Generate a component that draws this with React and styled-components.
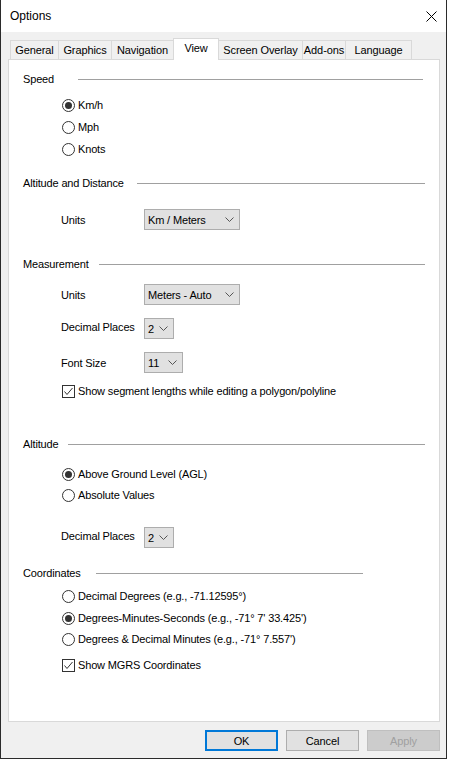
import styled, { createGlobalStyle } from "styled-components";

const GlobalStyle = createGlobalStyle`
  body {
    margin: 0;
    background: #ffffff;
    font-family: "Liberation Sans", Arial, sans-serif;
  }
`;

const WINDOW = styled.div`
  width: 447px;
  height: 759px;
  box-sizing: border-box;
  border-left: 1px solid #2b2b2b;
  border-right: 1px solid #2b2b2b;
  border-bottom: 1px solid #2b2b2b;
  display: flex;
  flex-direction: column;
  background: #f0f0f0;
`;

const TITLEBAR = styled.div`
  height: 32px;
  flex-shrink: 0;
  background: #ffffff;
  display: flex;
  align-items: center;
  justify-content: space-between;
  padding: 0 9px;
`;

const TITLE = styled.span`
  font-size: 12px;
  color: #000;
`;

const BODY = styled.div`
  flex: 1;
  padding: 6px 6px 0 7px;
  display: flex;
  flex-direction: column;
`;

const TABSTRIP = styled.div`
  height: 21px;
  display: flex;
  align-items: flex-end;
  padding-left: 2px;
`;

const TAB = styled.div`
  box-sizing: border-box;
  width: ${(p) => p.$w}px;
  height: ${(p) => (p.$active ? 22 : 19)}px;
  margin-left: -1px;
  margin-bottom: ${(p) => (p.$active ? -1 : 0)}px;
  position: relative;
  z-index: ${(p) => (p.$active ? 2 : 1)};
  border: 1px solid #d9d9d9;
  border-bottom: none;
  background: ${(p) => (p.$active ? "#ffffff" : "#f0f0f0")};
  display: flex;
  align-items: center;
  justify-content: center;
  padding-bottom: ${(p) => (p.$active ? 3 : 0)}px;
  font-size: 11px;
  letter-spacing: -0.1px;
  color: #000;
  &:first-child {
    margin-left: 0;
  }
`;

const PANEL = styled.div`
  box-sizing: border-box;
  width: 432px;
  height: 663px;
  background: #ffffff;
  border: 1px solid #d9d9d9;
  padding: 0 0 0 14px;
  display: flex;
  flex-direction: column;
  font-size: 11px;
  letter-spacing: -0.15px;
  color: #000;
`;

const HEADING = styled.div`
  display: flex;
  align-items: center;
  height: 16px;
  margin-top: ${(p) => p.$mt}px;
  padding-right: ${(p) => p.$pr}px;
`;

const HEADTEXT = styled.span`
  width: ${(p) => p.$w}px;
  flex-shrink: 0;
  white-space: nowrap;
`;

const RULE = styled.div`
  flex: 1;
  height: 1px;
  background: #a0a0a0;
`;

const OPTION = styled.div`
  display: flex;
  align-items: center;
  gap: 3px;
  height: 16px;
  margin-top: ${(p) => p.$mt}px;
  padding-left: 39px;
  white-space: nowrap;
`;

const CIRCLE = styled.span`
  box-sizing: border-box;
  width: 13px;
  height: 13px;
  border-radius: 50%;
  border: 1px solid #333333;
  background: #fff;
  display: flex;
  align-items: center;
  justify-content: center;
  flex-shrink: 0;
  &::after {
    content: "";
    display: ${(p) => (p.$checked ? "block" : "none")};
    width: 7px;
    height: 7px;
    border-radius: 50%;
    background: #333333;
  }
`;

const BOX = styled.span`
  box-sizing: border-box;
  width: 13px;
  height: 13px;
  border: 1px solid #333333;
  background: #fff;
  display: flex;
  align-items: center;
  justify-content: center;
  flex-shrink: 0;
`;

const FIELDROW = styled.div`
  display: flex;
  align-items: center;
  height: 21px;
  margin-top: ${(p) => p.$mt}px;
  padding-left: 38px;
`;

const LABEL = styled.span`
  width: 83px;
  flex-shrink: 0;
  white-space: nowrap;
  padding-bottom: ${(p) => p.$up || 0}px;
`;

const SELECT = styled.div`
  box-sizing: border-box;
  width: ${(p) => p.$w}px;
  height: 21px;
  background: #e1e1e1;
  border: 1px solid #adadad;
  display: flex;
  align-items: center;
  justify-content: space-between;
  padding: 0 5px 0 3px;
  white-space: nowrap;
`;

const BUTTONROW = styled.div`
  display: flex;
  justify-content: flex-end;
  gap: 8px;
  margin-top: 8px;
  width: 432px;
`;

const BUTTON = styled.div`
  box-sizing: border-box;
  width: 73px;
  height: 21px;
  display: flex;
  align-items: center;
  justify-content: center;
  font-size: 11px;
  letter-spacing: -0.1px;
  background: ${(p) => (p.$disabled ? "#cccccc" : "#e1e1e1")};
  border: ${(p) =>
    p.$default
      ? "2px solid #0078d7"
      : p.$disabled
      ? "1px solid #bfbfbf"
      : "1px solid #adadad"};
  color: ${(p) => (p.$disabled ? "#a0a0a0" : "#000")};
`;

function Chevron() {
  return (
    <svg width="9" height="5" viewBox="0 0 9 5">
      <polyline
        points="0.5,0.5 4.5,4.5 8.5,0.5"
        fill="none"
        stroke="#555"
        strokeWidth="1"
      />
    </svg>
  );
}

function Radio({ checked, mt, children }) {
  return (
    <OPTION $mt={mt}>
      <CIRCLE $checked={checked} />
      {children}
    </OPTION>
  );
}

function Check({ mt, children }) {
  return (
    <OPTION $mt={mt}>
      <BOX>
        <svg width="11" height="11" viewBox="0 0 11 11">
          <polyline
            points="1.5,5.5 4,8.5 9.5,2"
            fill="none"
            stroke="#333"
            strokeWidth="1"
          />
        </svg>
      </BOX>
      {children}
    </OPTION>
  );
}

function Heading({ mt, w, pr, children }) {
  return (
    <HEADING $mt={mt} $pr={pr}>
      <HEADTEXT $w={w}>{children}</HEADTEXT>
      <RULE />
    </HEADING>
  );
}

function Field({ mt, label, value, w, up }) {
  return (
    <FIELDROW $mt={mt}>
      <LABEL $up={up}>{label}</LABEL>
      <SELECT $w={w}>
        <span>{value}</span>
        <Chevron />
      </SELECT>
    </FIELDROW>
  );
}

const tabs = [
  ["General", 49],
  ["Graphics", 54],
  ["Navigation", 63],
  ["View", 46],
  ["Screen Overlay", 85],
  ["Add-ons", 44],
  ["Language", 67],
];

export default function App() {
  return (
    <>
      <GlobalStyle />
      <WINDOW>
        <TITLEBAR>
          <TITLE>Options</TITLE>
          <svg width="11" height="11" viewBox="0 0 11 11">
            <path d="M0.5 0.5 L10.5 10.5 M10.5 0.5 L0.5 10.5" stroke="#000" strokeWidth="1" />
          </svg>
        </TITLEBAR>
        <BODY>
          <TABSTRIP>
            {tabs.map(([name, w]) => (
              <TAB key={name} $w={w} $active={name === "View"}>
                {name}
              </TAB>
            ))}
          </TABSTRIP>
          <PANEL>
            <Heading mt={11} w={55} pr={16}>Speed</Heading>
            <Radio mt={10} checked>Km/h</Radio>
            <Radio mt={6}>Mph</Radio>
            <Radio mt={6}>Knots</Radio>

            <Heading mt={18} w={114} pr={14}>Altitude and Distance</Heading>
            <Field mt={18} label="Units" value="Km / Meters" w={96} />

            <Heading mt={26} w={76} pr={14}>Measurement</Heading>
            <Field mt={12} label="Units" value="Meters - Auto" w={96} />
            <Field mt={13} label="Decimal Places" value="2" w={30} up={4} />
            <Field mt={13} label="Font Size" value="11" w={39} />
            <Check mt={10}>Show segment lengths while editing a polygon/polyline</Check>

            <Heading mt={37} w={45} pr={14}>Altitude</Heading>
            <Radio mt={14} checked>Above Ground Level (AGL)</Radio>
            <Radio mt={5}>Absolute Values</Radio>
            <Field mt={24} label="Decimal Places" value="2" w={30} up={4} />

            <Heading mt={17} w={73} pr={76}>Coordinates</Heading>
            <Radio mt={7}>Decimal Degrees (e.g., -71.12595°)</Radio>
            <Radio mt={6} checked>Degrees-Minutes-Seconds (e.g., -71° 7' 33.425')</Radio>
            <Radio mt={5}>Degrees &amp; Decimal Minutes (e.g., -71° 7.557')</Radio>
            <Check mt={10}>Show MGRS Coordinates</Check>
          </PANEL>
          <BUTTONROW>
            <BUTTON $default>OK</BUTTON>
            <BUTTON>Cancel</BUTTON>
            <BUTTON $disabled>Apply</BUTTON>
          </BUTTONROW>
        </BODY>
      </WINDOW>
    </>
  );
}
